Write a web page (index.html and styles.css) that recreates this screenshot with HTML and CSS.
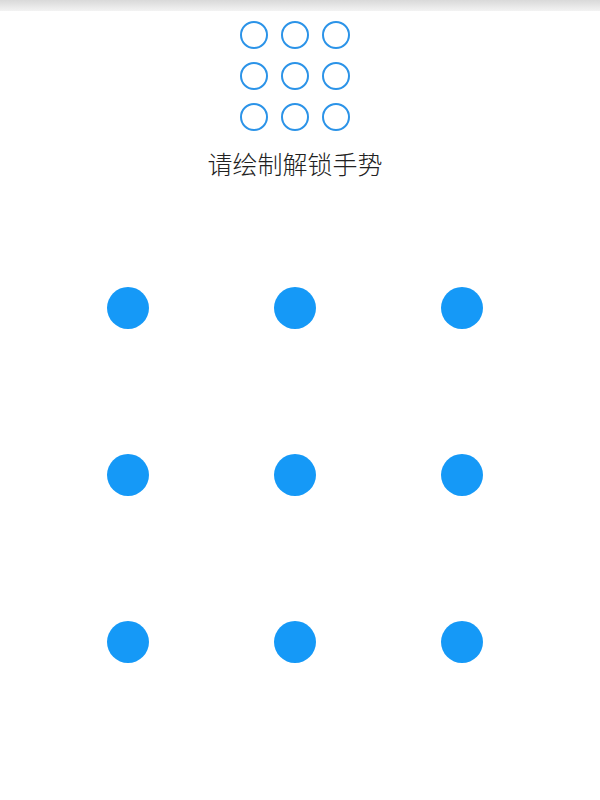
FILE: index.html
```html
<!DOCTYPE html>
<html lang="zh">
<head>
<meta charset="utf-8">
<link rel="stylesheet" href="styles.css">
</head>
<body>
<div class="topbar"></div>
<div class="page">
  <div class="preview">
    <span class="ring"></span><span class="ring"></span><span class="ring"></span>
    <span class="ring"></span><span class="ring"></span><span class="ring"></span>
    <span class="ring"></span><span class="ring"></span><span class="ring"></span>
  </div>
  <div class="title">请绘制解锁手势</div>
  <div class="pad">
    <div class="cell"><span class="dot"></span></div>
    <div class="cell"><span class="dot"></span></div>
    <div class="cell"><span class="dot"></span></div>
    <div class="cell"><span class="dot"></span></div>
    <div class="cell"><span class="dot"></span></div>
    <div class="cell"><span class="dot"></span></div>
    <div class="cell"><span class="dot"></span></div>
    <div class="cell"><span class="dot"></span></div>
    <div class="cell"><span class="dot"></span></div>
  </div>
</div>
</body>
</html>
```
FILE: styles.css
```css
html, body {
  margin: 0;
  padding: 0;
  background: #ffffff;
}
body {
  width: 600px;
  height: 800px;
  overflow: hidden;
  font-family: "Noto Sans CJK SC", "Noto Sans", sans-serif;
}
.topbar {
  height: 11px;
  background: linear-gradient(#d9d9d9, #f3f3f3);
}
.page {
  width: 590px;
  display: flex;
  flex-direction: column;
  align-items: center;
}
.preview {
  margin-top: 10px;
  display: grid;
  grid-template-columns: repeat(3, 28px);
  grid-auto-rows: 28px;
  gap: 13px;
}
.ring {
  box-sizing: border-box;
  width: 28px;
  height: 28px;
  border: 2px solid #2b93e8;
  border-radius: 50%;
}
.title {
  margin-top: 14px;
  font-size: 25px;
  line-height: 36px;
  color: #222;
  font-weight: 300;
  letter-spacing: 0;
}
.pad {
  margin-top: 43px;
  display: grid;
  grid-template-columns: repeat(3, 167px);
  grid-auto-rows: 167px;
}
.cell {
  display: flex;
  align-items: center;
  justify-content: center;
}
.dot {
  width: 42px;
  height: 42px;
  border-radius: 50%;
  background: #1599f7;
}
```
